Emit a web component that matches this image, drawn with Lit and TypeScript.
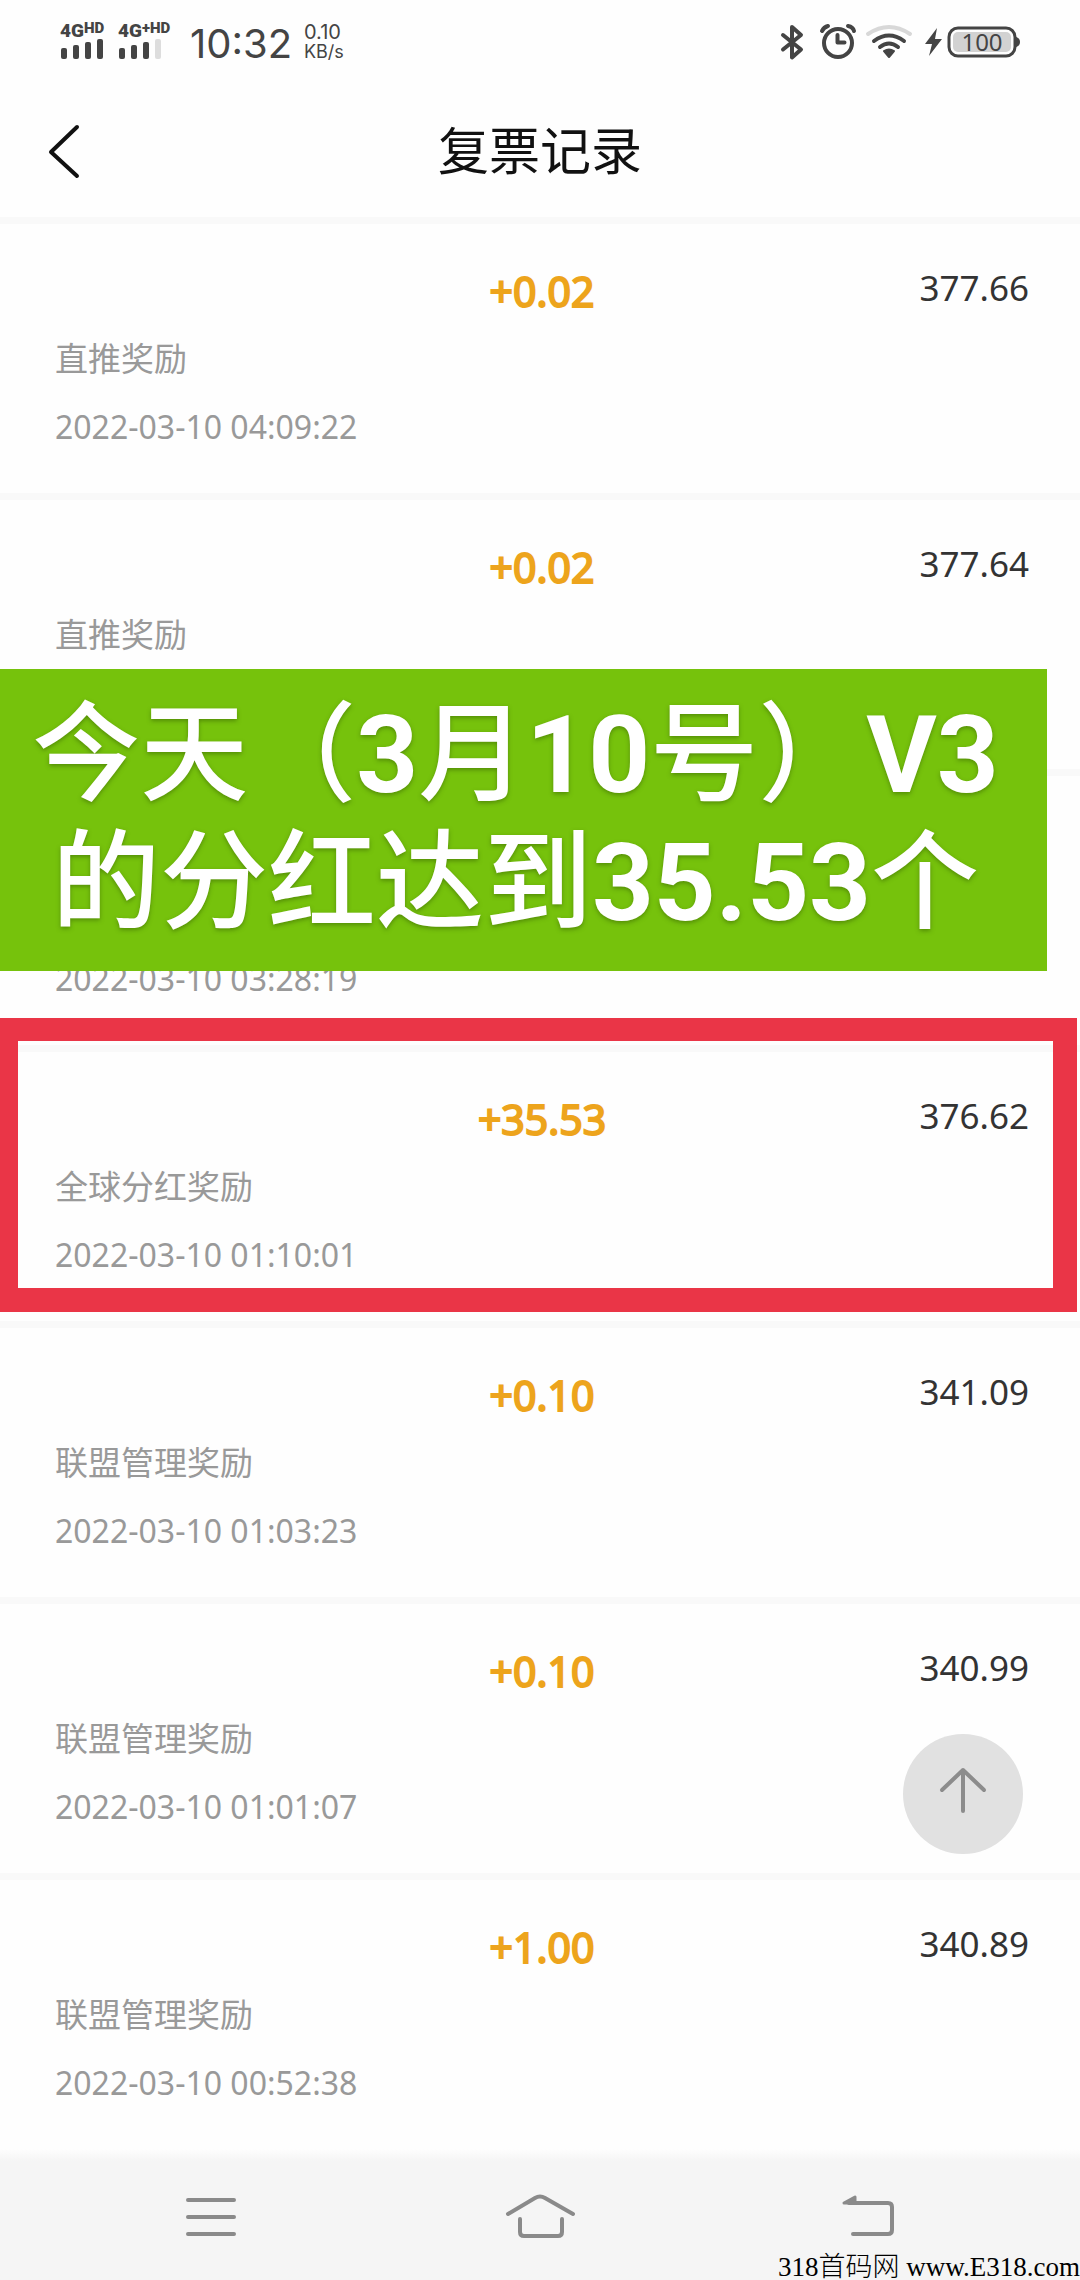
import { LitElement, html, css, svg, nothing } from "lit";
import { customElement, property } from "lit/decorators.js";

interface Entry {
  label?: string;
  amount?: string;
  balance?: string;
  time?: string;
  caption?: string[];
  framed?: boolean;
}

const ENTRIES: Entry[] = [
  { label: "直推奖励", amount: "+0.02", balance: "377.66", time: "2022-03-10 04:09:22" },
  {
    label: "直推奖励",
    amount: "+0.02",
    balance: "377.64",
    caption: ["今天（3月10号）V3", "的分红达到35.53个"],
  },
  { time: "2022-03-10 03:28:19" },
  { label: "全球分红奖励", amount: "+35.53", balance: "376.62", time: "2022-03-10 01:10:01", framed: true },
  { label: "联盟管理奖励", amount: "+0.10", balance: "341.09", time: "2022-03-10 01:03:23" },
  { label: "联盟管理奖励", amount: "+0.10", balance: "340.99", time: "2022-03-10 01:01:07" },
  { label: "联盟管理奖励", amount: "+1.00", balance: "340.89", time: "2022-03-10 00:52:38" },
];

const signalBars = (lit: number) => svg`
  ${[0, 1, 2, 3].map(
    (i) => svg`<rect x=${1 + i * 12} y=${9 - i * 3} width="6" height=${11 + i * 3} rx="2" fill=${i < lit ? "#444" : "#ddd"}></rect>`
  )}`;

// Latin letters and digits in a caption are set bolder than the Chinese text.
const captionLine = (line: string) =>
  line
    .split(/([0-9A-Z.]+)/)
    .filter(Boolean)
    .map((part) => (/^[0-9A-Z.]/.test(part) ? html`<b>${part}</b>` : part));

@customElement("status-bar")
export class StatusBar extends LitElement {
  static styles = css`
    :host {
      display: flex;
      justify-content: space-between;
      align-items: flex-start;
      height: 84px;
      padding: 0 60px;
      box-sizing: border-box;
      color: #444;
      font-family: Inter, Roboto, sans-serif;
    }
    .side {
      display: flex;
      align-items: center;
      height: 80px;
    }
    .signal {
      display: flex;
      flex-direction: column;
      width: 58px;
    }
    .network {
      display: flex;
      align-items: flex-start;
      height: 17px;
      font: 900 19px/18px Roboto, sans-serif;
      white-space: nowrap;
    }
    .hd {
      font-size: 15px;
      line-height: 12px;
    }
    .clock {
      margin-left: 14px;
      font-size: 40px;
      line-height: 48px;
      width: 108px;
      padding-top: 8px;
    }
    .rate {
      margin-left: 6px;
      padding-top: 4px;
      font-size: 20px;
      line-height: 20px;
    }
    .rate small {
      display: block;
      font-size: 18px;
    }
    svg {
      display: block;
      overflow: visible;
    }
  `;

  render() {
    return html`
      <div class="side">
        <div class="signal">
          <span class="network">4G<span class="hd">HD</span></span>
          <svg width="42" height="20" aria-hidden="true">${signalBars(4)}</svg>
        </div>
        <div class="signal">
          <span class="network">4G<span class="hd">+HD</span></span>
          <svg width="42" height="20" aria-hidden="true">${signalBars(3)}</svg>
        </div>
        <time class="clock">10:32</time>
        <div class="rate">0.10<small>KB/s</small></div>
      </div>
      <div class="side">
        <svg width="240" height="80" viewBox="780 0 240 80" fill="none" stroke="#444" stroke-linecap="round" stroke-linejoin="round" role="img" aria-label="100">
          <path d="M783 35l18 14.500-9 8V27l9 8-18 14.500" stroke-width="4"></path>
          <circle cx="838" cy="43" r="14" stroke-width="4"></circle>
          <path d="M837.500 35v7.500h7" stroke-width="4"></path>
          <path d="M822 31q2-4 6-5M848 26q5 1 6 5" stroke-width="4"></path>
          <path d="M868 34q21-14 42 0" stroke="#d8d8d8" stroke-width="4"></path>
          <path d="M874 41q15-11 30 0M880 47q9-7 18 0" stroke-width="4"></path>
          <path d="M884 51q5-3 10 0l-5 6z" fill="#444" stroke-width="2"></path>
          <path d="M937 28l-12 16h7l-3 12 13-17h-7z" fill="#444" stroke="none"></path>
          <rect x="949" y="28" width="66" height="28" rx="9" stroke-width="3"></rect>
          <rect x="953" y="32" width="58" height="20" rx="5" fill="#d2d2d2" stroke="none"></rect>
          <path d="M1016 37q4 1 4 5t-4 5z" fill="#444" stroke="none"></path>
          <text x="982" y="51" text-anchor="middle" fill="#444" stroke="none" font-family="Noto Sans, sans-serif" font-size="24">100</text>
        </svg>
      </div>
    `;
  }
}

@customElement("record-item")
export class RecordItem extends LitElement {
  @property({ attribute: false }) entry: Entry = {};

  static styles = css`
    :host {
      display: block;
      position: relative;
      border-top: 7px solid #f9f9f9;
      padding: 40px 51px 42px 55px;
    }
    .figures {
      display: grid;
      grid-template-columns: 1fr auto 1fr;
      align-items: start;
      height: 54px;
    }
    .amount {
      grid-column: 2;
      color: #eda41c;
      font-size: 41px;
      line-height: 54px;
      -webkit-text-stroke: 2px #eda41c;
    }
    .balance {
      text-align: right;
      color: #333;
      font-size: 35px;
      line-height: 48px;
    }
    .label,
    .time {
      display: block;
      height: 48px;
      margin: 17px 0 0;
      color: #999;
      font-size: 33px;
      line-height: 48px;
    }
    .time {
      margin-top: 20px;
      font-size: 32px;
    }
    .caption {
      position: absolute;
      z-index: 2;
      left: 0;
      right: 33px;
      top: 169px;
      height: 302px;
      box-sizing: border-box;
      padding: 22px 16px 0 0;
      background: #76c20c;
      color: #fff;
      text-align: center;
      white-space: nowrap;
      font: 500 108px/128px Roboto, "Noto Sans CJK SC", sans-serif;
      text-shadow: 0 2px 4px rgba(50, 90, 0, 0.5);
    }
    .caption span {
      display: block;
    }
    .caption b {
      font-weight: 700;
    }
    .frame {
      position: absolute;
      z-index: 1;
      inset: -34px 3px 9px 0;
      border: solid #ea3547;
      border-width: 23px 24px 24px 18px;
    }
  `;

  render() {
    const { label, amount, balance, time, caption, framed } = this.entry;
    return html`
      <div class="figures">
        <span class="amount">${amount}</span>
        <span class="balance">${balance}</span>
      </div>
      <p class="label">${label}</p>
      <time class="time">${time}</time>
      ${caption ? html`<div class="caption">${caption.map((line) => html`<span>${captionLine(line)}</span>`)}</div>` : nothing}
      ${framed ? html`<div class="frame"></div>` : nothing}
    `;
  }
}

@customElement("app-root")
export class AppRoot extends LitElement {
  static styles = css`
    :host {
      display: block;
      background: #fefefe;
      font-family: "Noto Sans", "Noto Sans CJK SC", sans-serif;
    }
    .page {
      position: relative;
      display: flex;
      flex-direction: column;
      min-height: 100vh;
    }
    .header {
      display: grid;
      grid-template-columns: 1fr auto 1fr;
      align-items: center;
      height: 133px;
    }
    .title {
      margin: 0;
      padding-bottom: 6px;
      color: #111;
      font: 400 51px/72px "Noto Sans CJK SC", sans-serif;
    }
    button {
      display: block;
      padding: 0;
      border: 0;
      background: none;
      cursor: pointer;
    }
    svg {
      display: block;
    }
    .back {
      justify-self: start;
      padding: 20px 44px;
    }
    .records {
      flex: 1;
      margin: 0;
      padding: 0;
      list-style: none;
    }
    .nav {
      display: flex;
      justify-content: space-around;
      align-items: flex-start;
      height: 131px;
      padding: 0 46px;
      box-sizing: border-box;
      background: linear-gradient(#fefefe, #f5f5f5 12px);
    }
    .nav button {
      padding: 36px 20px 20px;
    }
    .top {
      position: fixed;
      z-index: 3;
      right: 57px;
      bottom: 426px;
      width: 120px;
      height: 120px;
      border-radius: 50%;
      background: #e1e1e1;
    }
    .site {
      position: absolute;
      right: 0;
      bottom: 0;
      color: #000;
      text-decoration: none;
      white-space: nowrap;
      font: 300 27px/26px "Liberation Serif", "Noto Sans CJK SC", serif;
    }
  `;

  private toTop() {
    window.scrollTo({ top: 0, behavior: "smooth" });
  }

  render() {
    return html`
      <div class="page">
        <status-bar></status-bar>
        <header class="header">
          <button class="back" aria-label="返回">
            <svg width="40" height="56" fill="none" stroke="#111" stroke-width="4" stroke-linecap="round" stroke-linejoin="round">
              <path d="M33 4L7 29l26 24"></path>
            </svg>
          </button>
          <h1 class="title">复票记录</h1>
        </header>
        <ul class="records">
          ${ENTRIES.map((entry) => html`<li><record-item .entry=${entry}></record-item></li>`)}
        </ul>
        <button class="top" aria-label="回到顶部" @click=${this.toTop}>
          <svg width="120" height="120" fill="none" stroke="#8c8c8c" stroke-width="4" stroke-linecap="round" stroke-linejoin="round">
            <path d="M60 77V36M39 56l21-20 21 20"></path>
          </svg>
        </button>
        <nav class="nav">
          <button aria-label="菜单">
            <svg width="72" height="60" fill="none" stroke="#8a8a8a" stroke-width="4" stroke-linecap="round">
              <path d="M13 15h46M13 32h46M13 49h46"></path>
            </svg>
          </button>
          <button aria-label="主页">
            <svg width="72" height="60" fill="none" stroke="#8a8a8a" stroke-width="4" stroke-linecap="round" stroke-linejoin="round">
              <path d="M4 29l27-16q5-3 10 0l28 16M16 34v13q0 4 4 4h34q4 0 4-4V34"></path>
            </svg>
          </button>
          <button aria-label="返回">
            <svg width="72" height="60" fill="none" stroke="#8a8a8a" stroke-width="4" stroke-linecap="round" stroke-linejoin="round">
              <path d="M16 18h39q4 0 4 4v23q0 4-4 4H20"></path>
              <path d="M11 18l11-6v6z" fill="#8a8a8a" stroke-width="3"></path>
            </svg>
          </button>
        </nav>
        <a class="site" href="#">318首码网 www.E318.com</a>
      </div>
    `;
  }
}
